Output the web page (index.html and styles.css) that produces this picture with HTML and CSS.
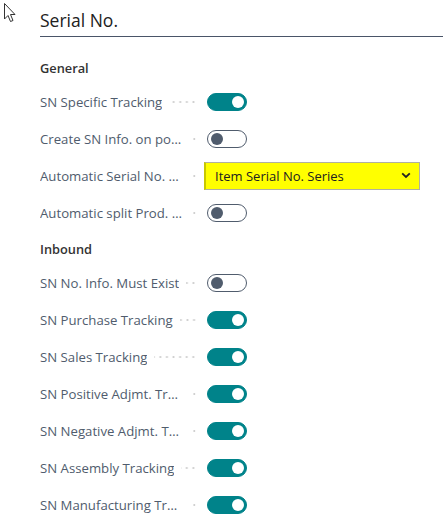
FILE: index.html
```html
<!DOCTYPE html>
<html>
<head>
<meta charset="utf-8">
<link rel="stylesheet" href="styles.css">
</head>
<body>
<svg class="cursor" width="14" height="22" viewBox="0 0 14 22"><path d="M1.5 1.5 L1.5 17 L5 13.5 L7.5 19.5 L10 18.5 L7.5 12.5 L12 12.5 Z" fill="#fff" stroke="#333" stroke-width="1" stroke-linejoin="miter"/></svg>
<main class="page">
  <h1 class="title">Serial No.</h1>
  <section class="group">
    <h2 class="group-head">General</h2>
    <div class="row"><div class="label"><span class="text">SN Specific Tracking</span><span class="leader"></span></div><span class="toggle on"></span></div>
    <div class="row"><div class="label"><span class="text">Create SN Info. on posting</span><span class="leader"></span></div><span class="toggle"></span></div>
    <div class="row"><div class="label"><span class="text">Automatic Serial No. Nos.</span><span class="leader"></span></div>
      <div class="select"><span>Item Serial No. Series</span><svg class="chev" width="10" height="7" viewBox="0 0 10 7"><path d="M1.2 1.3 L5 5 L8.8 1.3" fill="none" stroke="#222" stroke-width="1.8"/></svg></div></div>
    <div class="row"><div class="label"><span class="text">Automatic split Prod. Order</span><span class="leader"></span></div><span class="toggle"></span></div>
  </section>
  <section class="group second">
    <h2 class="group-head">Inbound</h2>
    <div class="row"><div class="label"><span class="text">SN No. Info. Must Exist</span><span class="leader"></span></div><span class="toggle"></span></div>
    <div class="row"><div class="label"><span class="text">SN Purchase Tracking</span><span class="leader"></span></div><span class="toggle on"></span></div>
    <div class="row"><div class="label"><span class="text">SN Sales Tracking</span><span class="leader"></span></div><span class="toggle on"></span></div>
    <div class="row"><div class="label"><span class="text">SN Positive Adjmt. Tracking</span><span class="leader"></span></div><span class="toggle on"></span></div>
    <div class="row"><div class="label"><span class="text">SN Negative Adjmt. Tracking</span><span class="leader"></span></div><span class="toggle on"></span></div>
    <div class="row"><div class="label"><span class="text">SN Assembly Tracking</span><span class="leader"></span></div><span class="toggle on"></span></div>
    <div class="row"><div class="label"><span class="text">SN Manufacturing Tracking</span><span class="leader"></span></div><span class="toggle on"></span></div>
  </section>
</main>
</body>
</html>
```
FILE: styles.css
```css
* { box-sizing: border-box; }
html, body { margin: 0; padding: 0; background: #fff; overflow: hidden; }
body { font-family: "Open Sans", "Noto Sans", sans-serif; color: #505c6d; width: 443px; height: 530px; }
.cursor { position: absolute; left: 3px; top: 2px; }
.page { padding-left: 40px; }
.title {
  margin: 0;
  padding-top: 9px;
  height: 37px;
  font-size: 17.5px;
  line-height: 22px;
  font-weight: 400;
  color: #212121;
  border-bottom: 1px solid #4a5568;
}
.group { padding-top: 16px; }
.group.second { padding-top: 3px; }
.group-head {
  margin: 0;
  height: 30px;
  display: flex;
  align-items: center;
  font-size: 12.8px;
  font-weight: 600;
  color: #333;
}
.row { height: 37px; display: flex; align-items: center; }
.label { width: 164px; display: flex; align-items: center; padding-right: 7px; font-size: 13.2px; }
.text { white-space: nowrap; overflow: hidden; text-overflow: ellipsis; min-width: 0; flex: 0 1 auto; }
.leader {
  flex: 1 0 7px;
  height: 4px;
  margin-left: 7px;
  background-image: radial-gradient(circle, #d0d0d0 0.9px, transparent 1.2px);
  background-size: 6.6px 4px;
  background-repeat: repeat-x;
  background-position: right center;
}
.toggle {
  position: relative;
  width: 40px;
  height: 18px;
  margin-left: 3px;
  border: 1px solid #505c6d;
  border-radius: 9px;
  background: #fff;
}
.toggle::after {
  content: "";
  position: absolute;
  top: 2px;
  left: 3px;
  width: 12px;
  height: 12px;
  border-radius: 50%;
  background: #505c6d;
}
.toggle.on { background: #00838a; border-color: #00838a; }
.toggle.on::after { left: auto; right: 2px; background: #fff; }
.select {
  width: 216px;
  height: 28px;
  display: flex;
  align-items: center;
  justify-content: space-between;
  padding: 0 8px 0 9px;
  background: #ffff00;
  border: 1px solid #b0b0a0;
  border-left: 2px solid #c8c800;
  font-size: 13px;
  color: #212121;
}
.chev { display: block; }
```
